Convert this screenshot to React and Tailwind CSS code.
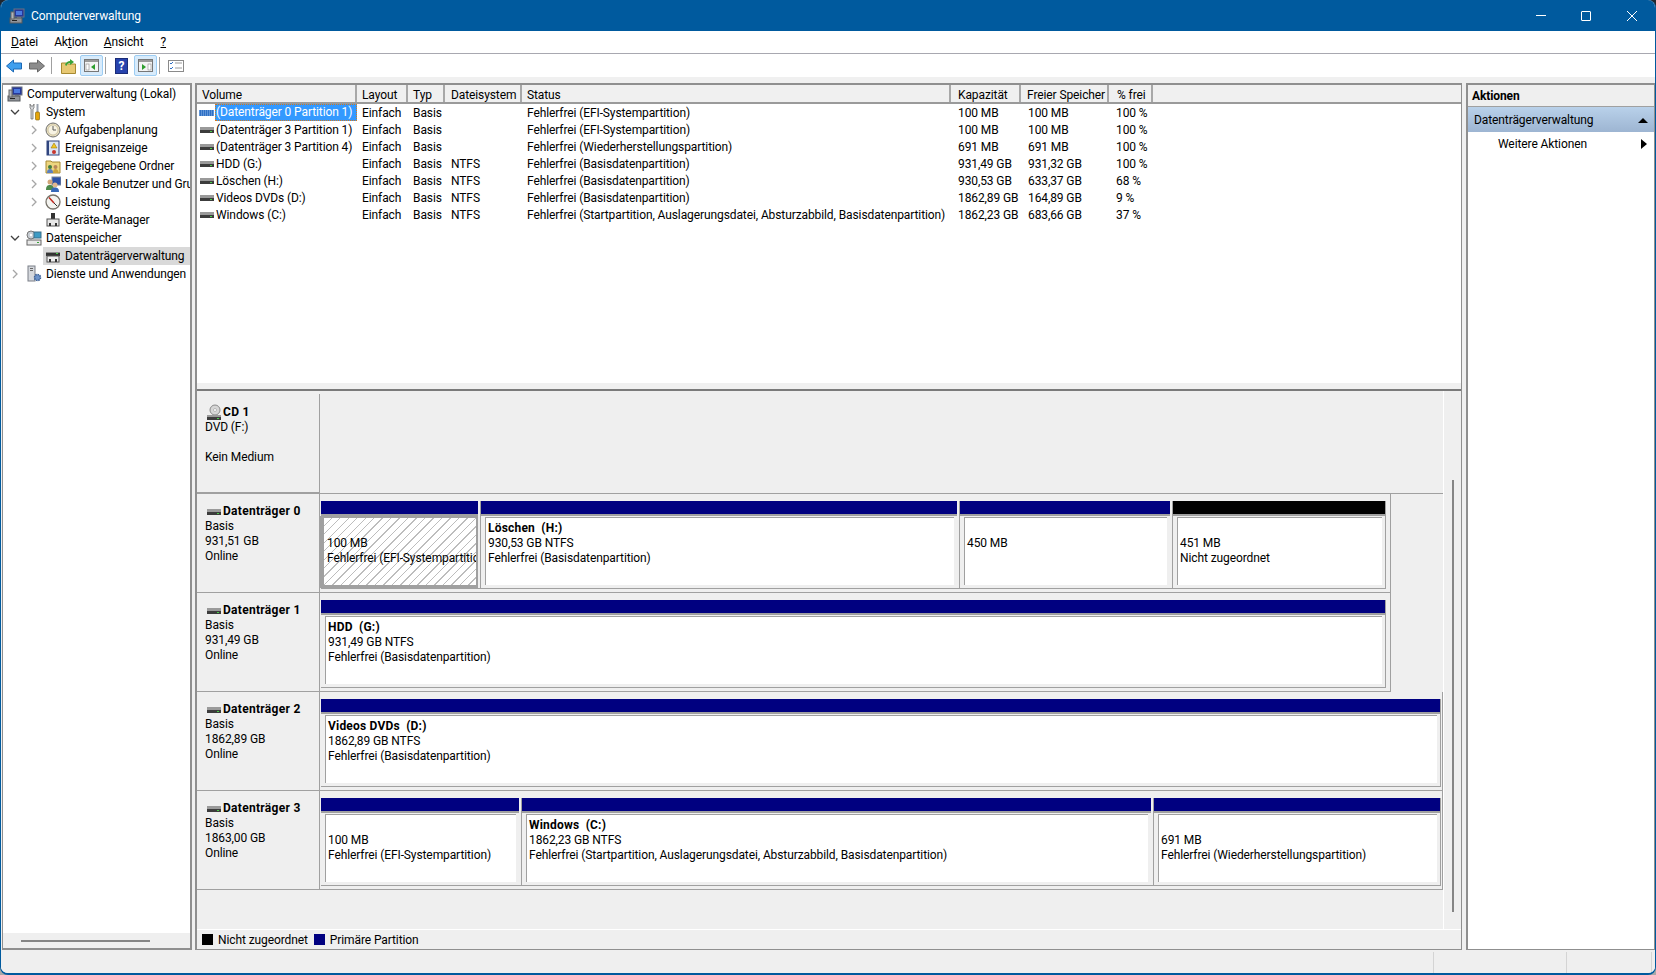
import React from 'react';

// Small MMC style icons, hand drawn
const Computer = () => (
  <svg width="16" height="16" viewBox="0 0 16 16" className="shrink-0">
    <rect x="5" y="1" width="10" height="8" fill="#26389a" stroke="#6b7280" />
    <rect x="7" y="3" width="6" height="4" fill="#4b7be0" />
    <rect x="8" y="9" width="4" height="2" fill="#8b8f96" />
    <rect x="1" y="10" width="12" height="5" fill="#8f9399" stroke="#55585c" />
    <rect x="3" y="12" width="5" height="1" fill="#222" />
    <rect x="2" y="4" width="3" height="7" fill="#b0b4ba" stroke="#666" />
  </svg>
);
const Tools = () => (
  <svg width="16" height="18" viewBox="0 0 16 18" className="shrink-0">
    <path d="M4 1v4l1 1v10h2V6l1-1V1L7 3H5z" fill="#d5d7da" stroke="#666" strokeWidth="0.7" />
    <rect x="10.5" y="1" width="2" height="8" fill="#9ca3af" />
    <rect x="9.5" y="9" width="4" height="8" rx="1" fill="#e5a50a" stroke="#7a5a00" strokeWidth="0.6" />
  </svg>
);
const Clock = () => (
  <svg width="16" height="16" viewBox="0 0 16 16" className="shrink-0">
    <circle cx="8" cy="8" r="7" fill="#e8dfc0" stroke="#6f6f6f" />
    <circle cx="8" cy="8" r="5" fill="#f7f3e3" stroke="#b9ad86" strokeWidth="0.6" />
    <path d="M8 4v4h3" fill="none" stroke="#5a5a5a" strokeWidth="1" />
  </svg>
);
const EventLog = () => (
  <svg width="16" height="16" viewBox="0 0 16 16" className="shrink-0">
    <rect x="2" y="1" width="12" height="14" fill="#dbe4f3" stroke="#30457f" />
    <rect x="2" y="1" width="2" height="14" fill="#30457f" />
    <path d="M9 3l3 5H6z" fill="#f3c623" stroke="#8a6d00" strokeWidth="0.5" />
    <circle cx="9" cy="12" r="2" fill="#c8362e" />
  </svg>
);
const SharedFolder = () => (
  <svg width="16" height="16" viewBox="0 0 16 16" className="shrink-0">
    <path d="M1 3h5l1 1h8v11H1z" fill="#edd57f" stroke="#a78a32" />
    <circle cx="5" cy="9" r="2" fill="#3f7d3f" />
    <path d="M2 15c0-3 1-4 3-4s3 1 3 4z" fill="#5b7fbf" />
    <circle cx="10.5" cy="9" r="2" fill="#b8865a" />
    <path d="M8 15c0-3 1-4 2.5-4s3 1 3 4z" fill="#c8a23b" />
  </svg>
);
const Users = () => (
  <svg width="16" height="16" viewBox="0 0 16 16" className="shrink-0">
    <rect x="7" y="1" width="9" height="8" fill="#2d52a8" stroke="#7c8797" />
    <circle cx="5" cy="6" r="2.5" fill="#d2a679" />
    <path d="M1 14c0-4 1.500-5 4-5s4 1 4 5z" fill="#4d8a4d" />
    <circle cx="10" cy="9" r="2.500" fill="#e1b88f" />
    <path d="M6 16c0-3.500 1.500-4.500 4-4.500s4 1 4 4.500z" fill="#3668b8" />
  </svg>
);
const Gauge = () => (
  <svg width="16" height="16" viewBox="0 0 16 16" className="shrink-0">
    <circle cx="8" cy="8" r="7" fill="#f4f4f0" stroke="#77736a" strokeWidth="1.300" />
    <path d="M4 3.500 9 9" stroke="#c0271e" strokeWidth="1.500" />
    <path d="M9 9 12 12" stroke="#333" strokeWidth="1" />
  </svg>
);
const DeviceManager = () => (
  <svg width="16" height="16" viewBox="0 0 16 16" className="shrink-0">
    <rect x="6" y="1" width="4" height="6" fill="#333" />
    <rect x="2" y="7" width="12" height="7" fill="#e8e8e8" stroke="#555" />
    <rect x="4" y="11" width="2" height="3" fill="#333" />
    <rect x="10" y="11" width="2" height="3" fill="#333" />
  </svg>
);
const Storage = () => (
  <svg width="16" height="16" viewBox="0 0 16 16" className="shrink-0">
    <circle cx="5" cy="5" r="4" fill="#c7cdd3" stroke="#777" />
    <circle cx="5" cy="5" r="1.200" fill="#fff" />
    <rect x="8" y="2" width="7" height="6" fill="#3d9bc4" stroke="#3b6f8a" />
    <rect x="1" y="10" width="14" height="5" fill="#e9e9e9" stroke="#666" />
    <rect x="11" y="12" width="2" height="1" fill="#3aa63a" />
  </svg>
);
const Drive = () => (
  <svg width="16" height="16" viewBox="0 0 16 16" className="shrink-0">
    <rect x="1" y="5" width="14" height="3" fill="#9a9a9a" />
    <rect x="1" y="8" width="14" height="3" fill="#3c3c3c" />
    <rect x="11" y="9" width="2" height="1" fill="#49d049" />
  </svg>
);
const SelectedDrive = () => (
  <svg width="16" height="16" viewBox="0 0 16 16" className="shrink-0">
    <rect x="1" y="4" width="14" height="4" fill="#333" />
    <rect x="1" y="4" width="14" height="1" fill="#8f8f8f" />
    <rect x="2" y="8" width="12" height="6" fill="#eee" stroke="#555" />
    <rect x="4" y="11" width="2" height="3" fill="#333" />
    <rect x="10" y="11" width="2" height="3" fill="#333" />
    <rect x="11" y="5" width="2" height="1" fill="#49d049" />
  </svg>
);
const HatchDrive = () => (
  <svg width="15" height="16" viewBox="0 0 15 16" className="shrink-0">
    <rect x="0" y="5" width="15" height="6" fill="#2f6fc4" />
    <path d="M0 6h15M0 8h15M0 10h15" stroke="#a8cdf5" strokeWidth="0.8" strokeDasharray="1 1" />
  </svg>
);
const CdDrive = () => (
  <svg width="16" height="18" viewBox="0 0 16 18" className="shrink-0">
    <circle cx="9" cy="6" r="5" fill="#d6d6d6" stroke="#8a8a8a" />
    <circle cx="9" cy="6" r="1.500" fill="#fff" stroke="#8a8a8a" strokeWidth="0.5" />
    <rect x="1" y="11" width="14" height="2" fill="#9a9a9a" />
    <rect x="1" y="13" width="14" height="3" fill="#3c3c3c" />
    <rect x="11" y="14" width="2" height="1" fill="#49d049" />
  </svg>
);
const Services = () => (
  <svg width="16" height="18" viewBox="0 0 16 18" className="shrink-0">
    <rect x="2" y="1" width="7" height="15" fill="#d5d8dd" stroke="#7a7f87" />
    <rect x="4" y="3" width="3" height="1" fill="#666" />
    <rect x="4" y="5" width="3" height="1" fill="#666" />
    <circle cx="11.500" cy="12.500" r="3" fill="#6d93c9" stroke="#3b5f96" strokeWidth="1.500" strokeDasharray="1.500 0.800" />
  </svg>
);

const Chevron = ({ open }) => (
  <svg width="10" height="10" viewBox="0 0 10 10" className="shrink-0">
    {open ? (
      <path d="M1 3l4 4 4-4" fill="none" stroke="#404040" strokeWidth="1.300" />
    ) : (
      <path d="M3 1l4 4-4 4" fill="none" stroke="#a6a6a6" strokeWidth="1.300" />
    )}
  </svg>
);

const treeRows = [
  { label: 'Computerverwaltung (Lokal)', icon: <Computer />, level: 0 },
  { label: 'System', icon: <Tools />, level: 1, open: true },
  { label: 'Aufgabenplanung', icon: <Clock />, level: 2, closed: true },
  { label: 'Ereignisanzeige', icon: <EventLog />, level: 2, closed: true },
  { label: 'Freigegebene Ordner', icon: <SharedFolder />, level: 2, closed: true },
  { label: 'Lokale Benutzer und Gruppen', icon: <Users />, level: 2, closed: true },
  { label: 'Leistung', icon: <Gauge />, level: 2, closed: true },
  { label: 'Geräte-Manager', icon: <DeviceManager />, level: 2 },
  { label: 'Datenspeicher', icon: <Storage />, level: 1, open: true },
  { label: 'Datenträgerverwaltung', icon: <SelectedDrive />, level: 2, selected: true },
  { label: 'Dienste und Anwendungen', icon: <Services />, level: 1, closed: true },
];

const columns = [
  { label: 'Volume', w: 'w-[160px]', head: 'pl-[5px]', cell: 'pl-[2px]' },
  { label: 'Layout', w: 'w-[51px]', head: 'pl-[5px]', cell: 'pl-[5px]' },
  { label: 'Typ', w: 'w-[37px]', head: 'pl-[5px]', cell: 'pl-[5px]' },
  { label: 'Dateisystem', w: 'w-[77px]', head: 'pl-[6px]', cell: 'pl-[6px]' },
  { label: 'Status', w: 'w-[429px]', head: 'pl-[5px]', cell: 'pl-[5px]' },
  { label: 'Kapazität', w: 'w-[70px]', head: 'pl-[7px]', cell: 'pl-[7px]' },
  { label: 'Freier Speicher', w: 'w-[88px]', head: 'pl-[6px]', cell: 'pl-[7px]' },
  { label: '% frei', w: 'w-[44px]', head: 'pl-[8px]', cell: 'pl-[7px]' },
];

const volumes = [
  ['(Datenträger 0 Partition 1)', 'Einfach', 'Basis', '', 'Fehlerfrei (EFI-Systempartition)', '100 MB', '100 MB', '100 %'],
  ['(Datenträger 3 Partition 1)', 'Einfach', 'Basis', '', 'Fehlerfrei (EFI-Systempartition)', '100 MB', '100 MB', '100 %'],
  ['(Datenträger 3 Partition 4)', 'Einfach', 'Basis', '', 'Fehlerfrei (Wiederherstellungspartition)', '691 MB', '691 MB', '100 %'],
  ['HDD (G:)', 'Einfach', 'Basis', 'NTFS', 'Fehlerfrei (Basisdatenpartition)', '931,49 GB', '931,32 GB', '100 %'],
  ['Löschen (H:)', 'Einfach', 'Basis', 'NTFS', 'Fehlerfrei (Basisdatenpartition)', '930,53 GB', '633,37 GB', '68 %'],
  ['Videos DVDs (D:)', 'Einfach', 'Basis', 'NTFS', 'Fehlerfrei (Basisdatenpartition)', '1862,89 GB', '164,89 GB', '9 %'],
  ['Windows (C:)', 'Einfach', 'Basis', 'NTFS', 'Fehlerfrei (Startpartition, Auslagerungsdatei, Absturzabbild, Basisdatenpartition)', '1862,23 GB', '683,66 GB', '37 %'],
];

const disks = [
  {
    name: 'Datenträger 0', size: '931,51 GB', frame: 'w-[1071px]',
    parts: [
      { w: 'w-[160px]', lines: ['', '100 MB', 'Fehlerfrei (EFI-Systempartition)'], hatch: true },
      { w: 'w-[479px]', lines: ['Löschen  (H:)', '930,53 GB NTFS', 'Fehlerfrei (Basisdatenpartition)'] },
      { w: 'w-[213px]', lines: ['', '450 MB'] },
      { w: 'w-[213px]', lines: ['', '451 MB', 'Nicht zugeordnet'], black: true },
    ],
  },
  {
    name: 'Datenträger 1', size: '931,49 GB', frame: 'w-[1071px]',
    parts: [{ w: 'w-[1065px]', lines: ['HDD  (G:)', '931,49 GB NTFS', 'Fehlerfrei (Basisdatenpartition)'] }],
  },
  {
    name: 'Datenträger 2', size: '1862,89 GB', frame: 'w-[1125px]',
    parts: [{ w: 'w-[1120px]', lines: ['Videos DVDs  (D:)', '1862,89 GB NTFS', 'Fehlerfrei (Basisdatenpartition)'] }],
  },
  {
    name: 'Datenträger 3', size: '1863,00 GB', frame: 'w-[1125px]',
    parts: [
      { w: 'w-[201px]', lines: ['', '100 MB', 'Fehlerfrei (EFI-Systempartition)'] },
      { w: 'w-[632px]', lines: ['Windows  (C:)', '1862,23 GB NTFS', 'Fehlerfrei (Startpartition, Auslagerungsdatei, Absturzabbild, Basisdatenpartition)'] },
      { w: 'w-[287px]', lines: ['', '691 MB', 'Fehlerfrei (Wiederherstellungspartition)'] },
    ],
  },
];

const PartText = ({ lines }) => (
  <div className="pt-[3px] leading-[15px] whitespace-pre">
    {lines.map((line, i) => (
      <div key={i} className={`h-[15px] ${i === 0 ? 'font-bold tracking-[0.2px]' : ''}`}>{line}</div>
    ))}
  </div>
);

const Partition = ({ part }) => (
  <div className={`${part.w} h-[88px] shrink-0 flex flex-col border-r border-b border-[#a0a0a0] pr-[2px] last:pr-0`}>
    <div className={`h-[15px] shrink-0 border-b-2 border-[#a0a0a0] ${part.black ? 'bg-black' : 'bg-[#000080]'}`} />
    {part.hatch ? (
      <div className="flex-1 -ml-[1px] border-l-[4px] border-r-[2px] border-t-[2px] border-b-[3px] border-[#a0a0a0] bg-[repeating-linear-gradient(135deg,#ffffff,#ffffff_5px,#bdbdbd_5px,#bdbdbd_6px)] overflow-hidden pl-[3px]">
        <PartText lines={part.lines} />
      </div>
    ) : (
      <div className="flex-1 mt-[1px] ml-[4px] mr-[3px] mb-[3px] border-l border-t border-[#a0a0a0] bg-white overflow-hidden pl-[2px]">
        <PartText lines={part.lines} />
      </div>
    )}
  </div>
);

const DiskInfo = ({ icon, name, top, children }) => (
  <div className={`w-[123px] shrink-0 h-full border-r border-b border-[#a0a0a0] pl-[8px] ${top} leading-[15px]`}>
    <div className="flex items-center h-[15px] font-bold tracking-[0.3px]">
      <span className="flex items-center w-[18px] pl-[1px]">{icon}</span>
      <span>{name}</span>
    </div>
    {children}
  </div>
);

const ToggleButton = ({ children }) => (
  <div className="w-[23px] h-[21px] shrink-0 rounded-[2px] bg-[#d8ebfb] border border-[#9dcdf3] flex items-center justify-center">
    {children}
  </div>
);

const ToolSep = ({ className }) => <div className={`w-px h-[17px] shrink-0 bg-[#a0a0a0] ${className}`} />;

const App = () => {
  return (
    <div className="w-[1656px] h-[975px] bg-linear-to-b from-[#20262e] to-[#a8a8a8] overflow-hidden font-['Roboto',sans-serif] text-[12px] tracking-[-0.1px] text-black">
      <div className="w-full h-full flex flex-col rounded-[8px] overflow-hidden bg-[#f0f0f0] border-x border-b-2 border-[#005a9e]">
        {/* Title bar */}
        <div className="h-[31px] shrink-0 -mx-[1px] bg-[#005a9e] flex items-center text-white">
          <span className="ml-[9px] mr-[6px]"><Computer /></span>
          <span>Computerverwaltung</span>
          <div className="ml-auto flex items-center">
            <div className="w-[45px] h-[31px] flex items-center justify-center">
              <div className="w-[10px] h-[1px] bg-white" />
            </div>
            <div className="w-[45px] h-[31px] flex items-center justify-center">
              <div className="w-[10px] h-[10px] border border-white rounded-[1px]" />
            </div>
            <div className="w-[48px] h-[31px] flex items-center justify-center">
              <svg width="10" height="10" viewBox="0 0 10 10">
                <path d="M0 0l10 10M10 0L0 10" stroke="white" strokeWidth="1" />
              </svg>
            </div>
          </div>
        </div>

        {/* Menu */}
        <div className="h-[23px] shrink-0 bg-white border-b border-[#a8a8b0] flex items-center">
          <span className="ml-[10px]"><u>D</u>atei</span>
          <span className="ml-[16px]">Ak<u>t</u>ion</span>
          <span className="ml-[16px]"><u>A</u>nsicht</span>
          <span className="ml-[17px]"><u>?</u></span>
        </div>

        {/* Toolbar */}
        <div className="h-[23px] shrink-0 bg-white flex items-center pl-[5px]">
          <svg width="16" height="14" viewBox="0 0 16 14" className="shrink-0">
            <path d="M0.500 7l7-6v3h8v6h-8v3z" fill="#3f9fee" stroke="#1c69b5" />
          </svg>
          <svg width="16" height="14" viewBox="0 0 16 14" className="ml-[7px] shrink-0">
            <path d="M15.500 7l-7-6v3h-8v6h8v3z" fill="#8c8c8c" stroke="#666" />
          </svg>
          <ToolSep className="ml-[6px]" />
          <svg width="15" height="16" viewBox="0 0 15 16" className="ml-[9px] shrink-0">
            <path d="M0.500 5h5l1 1h8v9.500h-14z" fill="#e7c873" stroke="#a78a32" />
            <path d="M4 7c1-3 3-4 5-4V1l4 3-4 3V5C7 5 6 6 5.500 8z" fill="#38a338" />
          </svg>
          <div className="ml-[4px]">
            <ToggleButton>
              <svg width="15" height="13" viewBox="0 0 15 13">
                <rect x="0.500" y="0.500" width="14" height="12" fill="#f4f4f4" stroke="#777" />
                <rect x="1" y="1" width="13" height="2" fill="#9a9a9a" />
                <rect x="2" y="5" width="3" height="6" fill="#fff" stroke="#777" strokeWidth="0.500" />
                <path d="M11 5v6L7 8z" fill="#2e9e2e" />
              </svg>
            </ToggleButton>
          </div>
          <ToolSep className="ml-[2px]" />
          <div className="ml-[9px] w-[13px] h-[16px] shrink-0 bg-[#2743ad] border border-[#1a2c78] text-white font-bold flex items-center justify-center text-[12px] leading-none">?</div>
          <div className="ml-[6px]">
            <ToggleButton>
              <svg width="15" height="13" viewBox="0 0 15 13">
                <rect x="0.500" y="0.500" width="14" height="12" fill="#f4f4f4" stroke="#777" />
                <rect x="1" y="1" width="13" height="2" fill="#9a9a9a" />
                <rect x="10" y="5" width="3" height="6" fill="#fff" stroke="#777" strokeWidth="0.500" />
                <path d="M4 5v6l4-3z" fill="#2e9e2e" />
              </svg>
            </ToggleButton>
          </div>
          <ToolSep className="ml-[2px]" />
          <svg width="16" height="12" viewBox="0 0 16 12" className="ml-[8px] shrink-0">
            <rect x="0.500" y="0.500" width="15" height="11" fill="#fff" stroke="#8a8a8a" />
            <path d="M2 3l1 1 2-2M2 8l1 1 2-2" fill="none" stroke="#2f6fc4" />
            <path d="M7 3h7M7 8h7" stroke="#9a9a9a" />
          </svg>
        </div>

        {/* Panels */}
        <div className="flex-1 min-h-0 flex pt-[6px] pl-[1px] pr-[1px]">
          {/* Tree */}
          <div className="w-[190px] shrink-0 border-t-2 border-l border-r-2 border-b-2 border-[#8f8f8f] bg-white flex flex-col">
            <div className="flex-1 overflow-hidden">
              {treeRows.map((row) => (
                <div key={row.label} className="h-[18px] flex items-center whitespace-nowrap overflow-hidden">
                  {row.level === 1 && <div className="w-[5px] shrink-0" />}
                  {row.level === 2 && <div className="w-[24px] shrink-0" />}
                  {row.level > 0 && (
                    <span className="w-[14px] shrink-0 flex items-center justify-center">
                      {row.open && <Chevron open />}
                      {row.closed && <Chevron />}
                    </span>
                  )}
                  <div className={`ml-[2px] pl-[2px] flex flex-1 items-center h-[18px] min-w-0 ${row.selected ? 'bg-[#d9d9d9]' : ''}`}>
                    <span className="w-[20px] shrink-0 flex items-center">{row.icon}</span>
                    <span>{row.label}</span>
                  </div>
                </div>
              ))}
            </div>
            <div className="h-[15px] shrink-0 bg-[#efefef] flex items-center pl-[18px]">
              <div className="w-[129px] h-[2px] bg-[#858585]" />
            </div>
          </div>

          {/* Middle */}
          <div className="w-[1267px] ml-[3px] shrink-0 flex flex-col border-t-2 border-l-2 border-r border-b border-[#8f8f8f]">
            {/* Volume table */}
            <div className="h-[303px] shrink-0 bg-white flex flex-col">
              <div className="h-[19px] flex shrink-0 bg-[#f0f0f0] border-b-2 border-[#9a9a9a]">
                {columns.map((col) => (
                  <div key={col.label} className={`${col.w} ${col.head} shrink-0 border-r-2 border-[#a8a8a8] pt-[2px] flex items-center whitespace-nowrap overflow-hidden`}>
                    {col.label}
                  </div>
                ))}
              </div>
              <div className="flex-1">
                {volumes.map((row, i) => (
                  <div key={i} className="h-[17px] flex items-center whitespace-nowrap">
                    {row.map((cell, c) => (
                      <div key={c} className={`${columns[c].w} ${columns[c].cell} shrink-0 ${c === 0 ? 'flex items-center' : ''} overflow-hidden`}>
                        {c === 0 && <span className="w-[16px] shrink-0 flex">{i === 0 ? <HatchDrive /> : <Drive />}</span>}
                        {c === 0 && i === 0 ? (
                          <span className="bg-[#3399ff] text-white h-[17px] leading-[17px] px-[1px] flex-1 outline-1 outline-dotted outline-[#d97a1a] -outline-offset-1">{cell}</span>
                        ) : (
                          <span className={c === 0 ? 'px-[1px]' : ''}>{cell}</span>
                        )}
                      </div>
                    ))}
                  </div>
                ))}
              </div>
              <div className="h-[5px] bg-[#f0f0f0] shrink-0" />
            </div>
            <div className="h-[3px] shrink-0 bg-[#f0f0f0] border-b-2 border-[#7a7a7a]" />

            {/* Disk map */}
            <div className="flex-1 min-h-0 bg-[#efefef] flex">
              <div className="w-[1247px] shrink-0 border-r border-white pt-[3px] flex flex-col">
                <div className="h-[100px] shrink-0 flex border-b border-[#a0a0a0]">
                  <DiskInfo icon={<CdDrive />} name="CD 1" top="pt-[11px]">
                    <div>DVD (F:)</div>
                    <div className="h-[15px]" />
                    <div>Kein Medium</div>
                  </DiskInfo>
                </div>
                {disks.map((disk) => (
                  <div key={disk.name} className="h-[99px] shrink-0 flex">
                    <DiskInfo icon={<Drive />} name={disk.name} top="pt-[10px]">
                      <div>Basis</div>
                      <div>{disk.size}</div>
                      <div>Online</div>
                    </DiskInfo>
                    <div className={`${disk.frame} h-full border-r border-b border-[#a0a0a0] flex pt-[7px] pl-[1px]`}>
                      {disk.parts.map((part, i) => (
                        <Partition key={i} part={part} />
                      ))}
                    </div>
                  </div>
                ))}
              </div>
              <div className="flex-1 flex justify-center">
                <div className="w-[2px] h-[432px] mt-[89px] bg-[#858585]" />
              </div>
            </div>

            {/* Legend */}
            <div className="h-[20px] shrink-0 bg-[#efefef] border-t border-white flex items-center pl-[5px]">
              <div className="w-[11px] h-[11px] bg-black" />
              <span className="ml-[5px]">Nicht zugeordnet</span>
              <div className="w-[11px] h-[11px] bg-[#000080] ml-[6px]" />
              <span className="ml-[5px]">Primäre Partition</span>
            </div>
          </div>

          {/* Actions */}
          <div className="w-[189px] ml-[4px] shrink-0 border-t-2 border-l-2 border-r border-b border-[#8f8f8f] bg-white flex flex-col">
            <div className="h-[22px] shrink-0 bg-[#efefef] border-b border-[#a0a0a0] pl-[4px] flex items-center font-bold">Aktionen</div>
            <div className="h-[25px] shrink-0 bg-linear-to-b from-[#b9d1ea] to-[#9db5d2] flex items-center pl-[6px] pr-[6px]">
              <span>Datenträgerverwaltung</span>
              <svg width="10" height="6" viewBox="0 0 10 6" className="ml-auto"><path d="M0 6l5-5 5 5z" fill="#000" /></svg>
            </div>
            <div className="h-[24px] shrink-0 flex items-center pl-[30px] pr-[7px]">
              <span>Weitere Aktionen</span>
              <svg width="6" height="10" viewBox="0 0 6 10" className="ml-auto"><path d="M0 0l6 5-6 5z" fill="#000" /></svg>
            </div>
          </div>
        </div>

        {/* Status bar */}
        <div className="h-[23px] shrink-0 flex bg-[#efefef] pt-[2px]">
          <div className="w-[1433px] border-r border-[#d4d4d4]" />
          <div className="w-[133px] border-r border-[#d4d4d4]" />
          <div className="w-[85px] border-r border-[#d4d4d4]" />
        </div>
      </div>
    </div>
  );
};

export default App;
